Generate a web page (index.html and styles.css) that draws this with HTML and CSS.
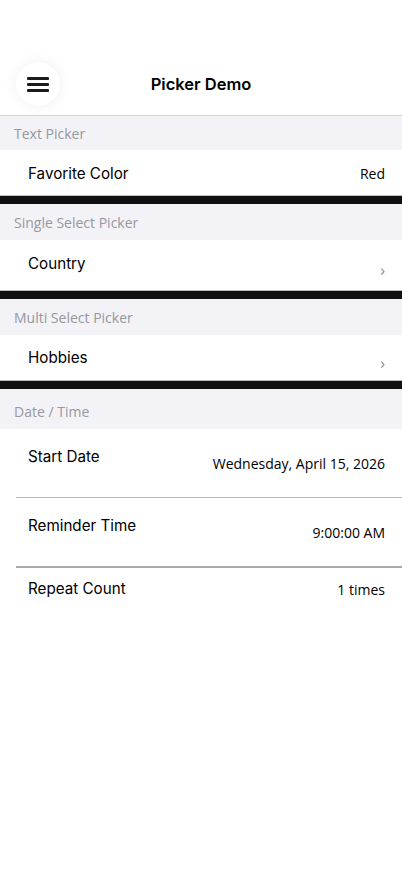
FILE: index.html
```html
<!DOCTYPE html>
<html>
<head>
<meta charset="utf-8">
<link rel="stylesheet" href="styles.css">
</head>
<body>
<div class="page">
  <header class="nav">
    <div class="menu-btn">
      <svg width="22" height="16" viewBox="0 0 22 16"><rect x="0" y="1" width="22" height="3" rx="1" fill="#1c1c1e"/><rect x="0" y="7" width="22" height="3" rx="1" fill="#1c1c1e"/><rect x="0" y="13" width="22" height="3" rx="1" fill="#1c1c1e"/></svg>
    </div>
    <div class="title">Picker Demo</div>
  </header>

  <div class="section-head h1">Text Picker</div>
  <div class="row r-fav"><span class="label">Favorite Color</span><span class="value">Red</span></div>
  <div class="divider"></div>

  <div class="section-head h2">Single Select Picker</div>
  <div class="row r-country"><span class="label">Country</span><span class="chev">›</span></div>
  <div class="divider"></div>

  <div class="section-head h3">Multi Select Picker</div>
  <div class="row r-hobbies"><span class="label">Hobbies</span><span class="chev">›</span></div>
  <div class="divider"></div>

  <div class="section-head h4">Date / Time</div>
  <div class="row tall"><span class="label">Start Date</span><span class="value low">Wednesday, April 15, 2026</span></div>
  <div class="sep"></div>
  <div class="row tall"><span class="label">Reminder Time</span><span class="value low">9:00:00 AM</span></div>
  <div class="sep thick"></div>
  <div class="row last"><span class="label">Repeat Count</span><span class="value">1 times</span></div>
</div>
</body>
</html>
```

FILE: styles.css
```css
html, body {
  margin: 0;
  padding: 0;
  background: #ffffff;
}
.page {
  width: 402px;
  min-height: 874px;
  background: #fff;
}
.nav {
  height: 116px;
  border-bottom: 1px solid #d4d4d8;
  display: flex;
  align-items: flex-end;
  box-sizing: border-box;
  position: relative;
}
.menu-btn {
  position: absolute;
  left: 16px;
  top: 62px;
  width: 44px;
  height: 44px;
  border-radius: 50%;
  background: #fff;
  box-shadow: 0 0 14px rgba(0,0,0,0.07);
  display: flex;
  align-items: center;
  justify-content: center;
}
.title {
  width: 100%;
  text-align: center;
  font-family: Inter, "Liberation Sans", sans-serif;
  font-weight: 600;
  font-size: 16.5px;
  color: #000;
  line-height: 20px;
  margin-bottom: 21px;
}
.section-head {
  background: #f2f2f7;
  font-family: "Open Sans", sans-serif;
  font-size: 14px;
  color: #98989d;
  padding-left: 14px;
  display: flex;
  align-items: center;
  box-sizing: border-box;
}
.h1 { height: 34px; }
.h2 { height: 36px; }
.h3 { height: 36px; }
.h4 { height: 40px; padding-top: 4px; }
.row {
  display: flex;
  justify-content: space-between;
  align-items: center;
  padding: 0 17px 0 28px;
  box-sizing: border-box;
  background: #fff;
}
.label {
  font-family: Inter, "Liberation Sans", sans-serif;
  font-size: 15.2px;
  color: #000;
}
.value {
  font-family: "Open Sans", sans-serif;
  font-size: 14px;
  color: #000;
}
.chev {
  font-family: "Open Sans", sans-serif;
  font-size: 16px;
  color: #8a8a8e;
  padding-top: 10px;
}
.r-fav { height: 45px; padding-top: 1px; }
.r-country { height: 50px; padding-bottom: 4px; }
.r-country .chev { padding-top: 14px; }
.r-hobbies { height: 45px; }
.divider {
  height: 8px;
  border-top: 1px solid #bdbdbd;
  background: #111;
}
.tall {
  height: 68px;
  align-items: flex-start;
  padding-top: 18px;
}
.value.low { padding-top: 7px; }
.sep {
  margin-left: 16px;
  height: 1px;
  background: #b8b8b8;
}
.sep.thick { height: 2px; background: #aaaaaa; }
.last {
  height: 44px;
  align-items: center;
  padding-bottom: 4px;
}
.last .value { padding-top: 3px; }
```
